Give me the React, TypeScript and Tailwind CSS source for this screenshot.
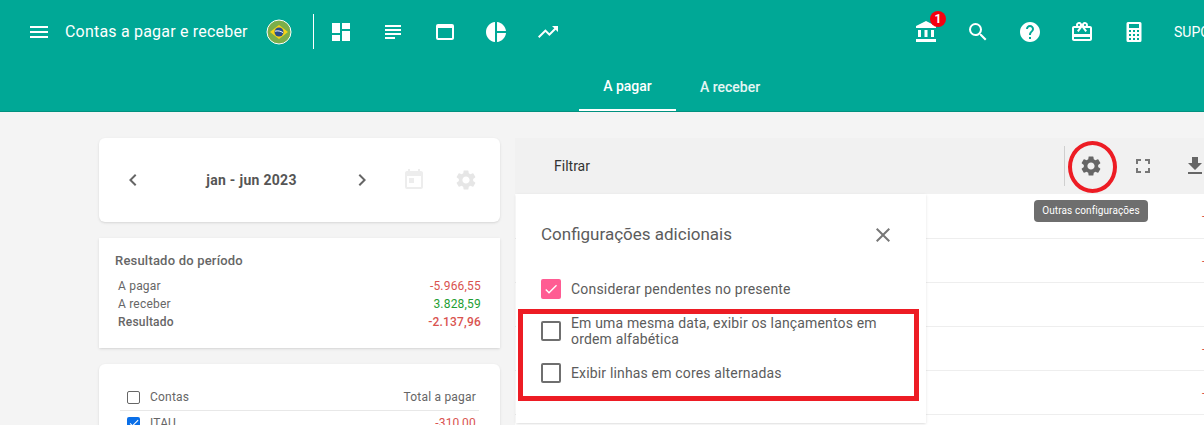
import React from "react";
import {
  MdMenu,
  MdDashboard,
  MdSubject,
  MdWebAsset,
  MdPieChart,
  MdTrendingUp,
  MdAccountBalance,
  MdSearch,
  MdHelp,
  MdCardGiftcard,
  MdChevronLeft,
  MdChevronRight,
  MdToday,
  MdSettings,
  MdFullscreen,
  MdFileDownload,
  MdClose,
  MdCheck,
} from "react-icons/md";

function Flag() {
  return (
    <svg width="26" height="26" viewBox="0 0 26 26" className="shrink-0">
      <circle cx="13" cy="13" r="12" fill="#7cae4a" stroke="#fff" strokeWidth="1" />
      <polygon points="13,6 22,13 13,20 4,13" fill="#f7d417" />
      <circle cx="13" cy="13" r="4.5" fill="#2b4c8c" />
      <path d="M9 12.2c3-.8 5.5-.2 8 1.4" stroke="#fff" strokeWidth="1" fill="none" />
    </svg>
  );
}

function Calculator() {
  return (
    <svg width="24" height="24" viewBox="0 0 24 24" fill="#fff">
      <path
        fillRule="evenodd"
        d="M6 2h12a1.5 1.5 0 0 1 1.5 1.5v17A1.5 1.5 0 0 1 18 22H6a1.5 1.5 0 0 1-1.5-1.5v-17A1.5 1.5 0 0 1 6 2Zm1 2v4h10V4H7Zm0 6v2h2v-2H7Zm4 0v2h2v-2h-2Zm4 0v2h2v-2h-2Zm-8 4v2h2v-2H7Zm4 0v2h2v-2h-2Zm4 0v2h2v-2h-2Zm-8 4v2h2v-2H7Zm4 0v2h2v-2h-2Zm4 0v2h2v-2h-2Z"
      />
    </svg>
  );
}

function ResultRow({ label, value, color, bold }: { label: string; value: string; color: string; bold?: boolean }) {
  return (
    <div className={`flex justify-between h-[18px] leading-[18px] ${bold ? "font-medium" : ""}`}>
      <span>{label}</span>
      <span className={color}>{value}</span>
    </div>
  );
}

function Option({ label }: { label: React.ReactNode }) {
  return (
    <div className="flex items-center gap-[10px]">
      <span className="w-5 h-5 shrink-0 rounded-[2px] border-2 border-[#6f6f6f]" />
      <span className="text-sm leading-4 tracking-[0.16px] text-[#5c5c5c]">{label}</span>
    </div>
  );
}

const rows = [true, true, false, true, true, false];

export default function App() {
  return (
    <div className="relative w-[1204px] h-[425px] overflow-hidden bg-[#f4f4f4] font-['Roboto',sans-serif]">
      {/* topo */}
      <header className="h-[112px] bg-[#00a896] border-b border-[#00917f] text-white">
        <div className="h-[63px] flex items-center pl-[27px]">
          <MdMenu size={24} className="shrink-0" />
          <span className="ml-[14px] w-[201px] text-base tracking-[0.2px] shrink-0">Contas a pagar e receber</span>
          <Flag />
          <span className="ml-[21px] w-px h-[35px] bg-white shrink-0" />
          <div className="ml-[15px] flex items-center gap-[27.75px] shrink-0">
            <MdDashboard size={24} />
            <MdSubject size={24} />
            <MdWebAsset size={24} />
            <MdPieChart size={24} />
            <MdTrendingUp size={24} />
          </div>
          <div className="relative ml-[354px] flex items-center gap-[28px] shrink-0">
            <MdAccountBalance size={24} />
            <span className="absolute left-[16px] -top-[9px] w-4 h-4 rounded-full bg-[#f5000f] text-xs leading-4 font-bold text-center">
              1
            </span>
            <MdSearch size={24} />
            <MdHelp size={24} />
            <MdCardGiftcard size={24} />
            <Calculator />
          </div>
          <span className="ml-[28px] text-sm shrink-0">SUPORTE</span>
        </div>
        <nav className="h-[48px] flex pl-[579px] text-sm font-medium">
          <div className="w-[97px] h-full flex items-center justify-center border-b-2 border-white">A pagar</div>
          <div className="w-[108px] h-full flex items-center justify-center text-white/90">A receber</div>
        </nav>
      </header>

      <main className="flex items-start gap-[15px] pl-[99px] pt-[26px]">
        {/* coluna esquerda */}
        <div className="w-[401px] shrink-0 flex flex-col gap-4 text-xs tracking-[0.2px] text-[#666]">
          <section className="h-[84px] bg-white rounded-md shadow-sm flex items-center pl-[22px] pr-[22px]">
            <MdChevronLeft size={24} className="text-[#666]" />
            <span className="w-[205px] pl-2 text-center text-sm font-bold tracking-[0.3px] text-[#555]">jan - jun 2023</span>
            <MdChevronRight size={24} className="text-[#666]" />
            <MdToday size={24} className="ml-[28px] text-[#ededed]" />
            <MdSettings size={24} className="ml-[28px] text-[#e6e6e6]" />
          </section>

          <section className="h-[110px] bg-white shadow-sm pt-[14px] pl-4 pr-[19px]">
            <div className="text-[13px] font-medium leading-[18px] mb-[7px]">Resultado do período</div>
            <div className="pl-[3px]">
              <ResultRow label="A pagar" value="-5.966,55" color="text-[#d9534f]" />
              <ResultRow label="A receber" value="3.828,59" color="text-[#1e9e33]" />
              <ResultRow label="Resultado" value="-2.137,96" color="text-[#d9534f]" bold />
            </div>
          </section>

          <section className="h-[120px] bg-white rounded-md shadow-sm pt-[20px] px-[21px]">
            <div className="flex items-center h-[27px] pl-[7px] pr-[3px] border-b border-[#e8e8e8]">
              <span className="w-[13px] h-[13px] rounded-[2px] border border-[#666]" />
              <span className="ml-[10px]">Contas</span>
              <span className="ml-auto">Total a pagar</span>
            </div>
            <div className="flex items-center h-[24px] pl-[7px] pr-[3px]">
              <span className="w-[13px] h-[13px] rounded-[2px] bg-[#0a6fe8] flex items-center justify-center text-white">
                <MdCheck size={12} />
              </span>
              <span className="ml-[10px]">ITAU</span>
              <span className="ml-auto text-[#d9534f]">-310,00</span>
            </div>
          </section>
        </div>

        {/* lista */}
        <section className="w-[720px] shrink-0">
          <div className="h-[56px] bg-[#f1f1f1] flex items-center pl-[39px] text-sm text-[#333]">
            <span>Filtrar</span>
            <span className="ml-[474px] w-px h-[40px] bg-[#cfcfcf]" />
            <MdSettings size={24} className="ml-[14px] text-[#666]" />
            <MdFullscreen size={24} className="ml-[28px] text-[#777]" />
            <MdFileDownload size={24} className="ml-[28px] text-[#666]" />
          </div>
          <div className="bg-white">
            {rows.map((dash, i) => (
              <div key={i} className="h-[44px] first:h-[45px] border-b border-[#eeeeee] flex items-center pl-[687px] text-xs text-[#d9534f]">
                {dash ? "-310,00" : ""}
              </div>
            ))}
          </div>
        </section>
      </main>

      {/* popup de configuracoes */}
      <div className="absolute left-[516px] top-[194px] w-[410px] h-[229px] bg-white shadow-sm pt-[29px] pl-[25px] pr-[31px]">
        <div className="flex items-center justify-between h-[24px]">
          <span className="text-[17px] text-[#5c5c5c]">Configurações adicionais</span>
          <MdClose size={24} className="text-[#777]" />
        </div>
        <div className="mt-[32px] flex items-center gap-[10px]">
          <span className="w-5 h-5 rounded-[2px] bg-[#ff5c93] text-white flex items-center justify-center">
            <MdCheck size={16} />
          </span>
          <span className="text-sm tracking-[0.2px] text-[#5c5c5c]">Considerar pendentes no presente</span>
        </div>
        <div className="mt-[16px]">
          <Option label={<>Em uma mesma data, exibir os lançamentos em<br />ordem alfabética</>} />
        </div>
        <div className="mt-[16px]">
          <Option label="Exibir linhas em cores alternadas" />
        </div>
      </div>

      {/* marcacoes da captura */}
      <div className="absolute left-[518px] top-[309px] w-[401px] h-[92px] border-[5px] border-[#ed1c24]" />
      <div className="absolute left-[1068px] top-[141px] w-[49px] h-[52px] rounded-[50%] border-[4px] border-[#ed1c24]" />

      {/* tooltip */}
      <div className="absolute left-[1034px] top-[200px] w-[114px] h-[22px] rounded-[4px] bg-[#6e6e6e] text-[10px] leading-[22px] tracking-[0.1px] text-center text-white">
        Outras configurações
      </div>
    </div>
  );
}
